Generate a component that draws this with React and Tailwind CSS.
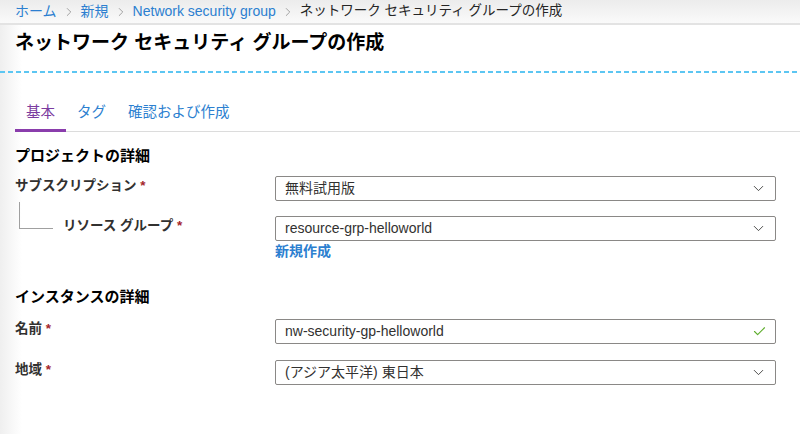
import { ChevronDown, ChevronRight, Check } from "lucide-react";

const font = { fontFamily: '"Liberation Sans", "Noto Sans CJK JP", sans-serif' };

function Label({ children, className = "" }) {
  return (
    <div className={`text-[13.5px] leading-[20px] font-bold text-[#323130] ${className}`}>
      {children} <span className="text-[#a4262c]">*</span>
    </div>
  );
}

function Select({ value }) {
  return (
    <div className="h-[25px] w-[501px] border border-[#8a8886] rounded-[2px] flex items-center justify-between pl-[9px] pr-[8px] text-[14px] text-[#323130] bg-white">
      <span className="leading-none">{value}</span>
      <ChevronDown size={17} strokeWidth={1.2} className="text-[#323130]" />
    </div>
  );
}

function Row({ label, children }) {
  return (
    <div className="flex items-start">
      <div className="w-[261px]">
        <Label>{label}</Label>
      </div>
      <div>{children}</div>
    </div>
  );
}

export default function App() {
  return (
    <div style={font} className="w-[800px] h-[434px] bg-white overflow-hidden relative">
      <div className="absolute left-0 top-0 bottom-0 w-[22px] bg-gradient-to-r from-[#efefef] to-white pointer-events-none" />
      <div className="relative">
        <div className="h-[25px] bg-gradient-to-b from-[#ececec] to-[#fafafa] border-b-[2px] border-[#e3e3e3] flex items-center pl-[15px] text-[14px]">
          <span className="text-[#2c7fd0]">ホーム</span>
          <ChevronRight size={14} strokeWidth={1.3} className="mx-[5px] text-[#888]" />
          <span className="text-[#2c7fd0]">新規</span>
          <ChevronRight size={14} strokeWidth={1.3} className="mx-[5px] text-[#888]" />
          <span className="text-[#2c7fd0]">Network security group</span>
          <ChevronRight size={14} strokeWidth={1.3} className="mx-[5px] text-[#888]" />
          <span className="text-[#252525] text-[13.5px]">ネットワーク セキュリティ グループの作成</span>
        </div>

        <h1 className="pl-[15px] pt-[5px] text-[19px] font-bold text-black leading-[26px]">
          ネットワーク セキュリティ グループの作成
        </h1>

        <div className="mt-[15px] h-[2px] bg-[repeating-linear-gradient(90deg,#5cc6f2_0_5px,transparent_5px_8px)]" />

        <div className="mt-[29px] ml-[15px] flex border-b border-[#dcdcdc] text-[14.5px]">
          <div className="px-[11px] pb-[5px] text-[#7b3ca0] border-b-[3px] border-[#8a3dac] -mb-[1px]">基本</div>
          <div className="px-[11px] pb-[5px] text-[#2c7fd0]">タグ</div>
          <div className="px-[11px] pb-[5px] text-[#2c7fd0]">確認および作成</div>
        </div>

        <div className="pl-[15px] pr-[24px]">
          <div className="mt-[13px] text-[15px] leading-[22px] font-bold text-black">プロジェクトの詳細</div>

          <div className="mt-[9px]">
            <Row label="サブスクリプション">
              <Select value="無料試用版" />
            </Row>
          </div>

          <div className="mt-[15px] flex items-start">
            <div className="w-[261px] flex items-start">
              <div className="ml-[4px] -mt-[14px] w-[34px] h-[27px] border-l border-b border-[#a0a0a0]" />
              <Label className="ml-[10px]">リソース グループ</Label>
            </div>
            <div>
              <Select value="resource-grp-helloworld" />
              <div className="text-[14px] leading-[20px] font-bold text-[#2c7fd0]">新規作成</div>
            </div>
          </div>

          <div className="mt-[25px] text-[15px] leading-[22px] font-bold text-black">インスタンスの詳細</div>

          <div className="mt-[11px]">
            <Row label="名前">
              <div className="h-[25px] w-[501px] border border-[#8a8886] rounded-[2px] flex items-center justify-between pl-[9px] pr-[8px] text-[14px] text-[#323130]">
                <span className="leading-none">nw-security-gp-helloworld</span>
                <Check size={15} strokeWidth={1.8} className="text-[#5fae2d]" />
              </div>
            </Row>
          </div>

          <div className="mt-[16px]">
            <Row label="地域">
              <Select value="(アジア太平洋) 東日本" />
            </Row>
          </div>
        </div>
      </div>
    </div>
  );
}
